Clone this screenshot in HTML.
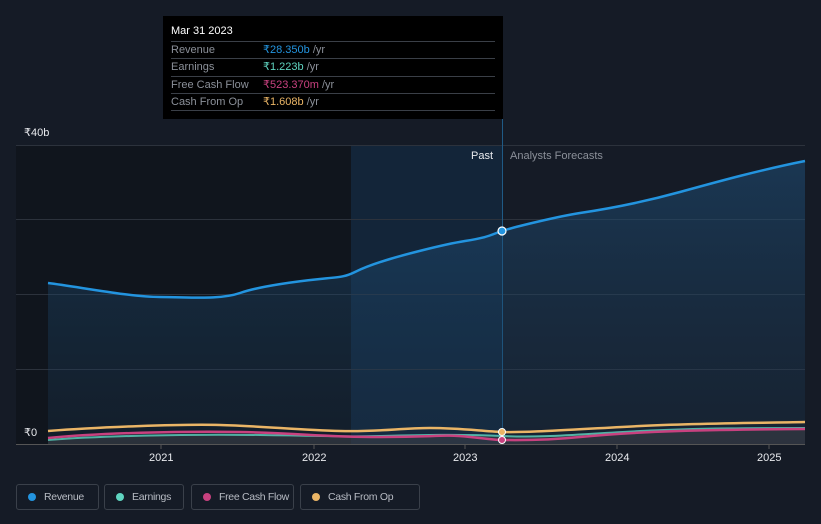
<!DOCTYPE html>
<html><head><style>
html,body{margin:0;width:821px;height:524px;background:#151b26;font-family:"Liberation Sans",sans-serif;overflow:hidden;position:relative}
.tt{position:absolute;left:163px;top:16px;width:340px;height:103px;background:#000;color:#fff;font-size:11px}
.tt .h{position:absolute;left:8px;top:9px;font-size:11px}
.row{position:absolute;left:8px;width:324px;height:17px;border-top:1px solid #3a3f47;color:#8b9099;line-height:17px}
.row span{position:absolute;left:92px}
.lg{position:absolute;top:484px;height:26px;border:1px solid #3a404a;border-radius:3px;color:#b8bcc4;font-size:10.5px;line-height:24px;box-sizing:border-box;padding-left:27px;white-space:nowrap;letter-spacing:-0.3px}
.lg i{position:absolute;left:11px;top:8px;width:8px;height:8px;border-radius:50%}
.ax{position:absolute;color:#e8eaee;font-size:11px}
</style></head><body>
<svg width="821" height="524" style="position:absolute;left:0;top:0">
<defs><linearGradient id="g" x1="0" y1="0" x2="0" y2="1"><stop offset="0" stop-color="#1f5583" stop-opacity=".8"/><stop offset="1" stop-color="#1c3a55" stop-opacity=".4"/></linearGradient></defs>
<rect x="16" y="145" width="486" height="299" fill="#10151d"/>
<rect x="351" y="145" width="151" height="299" fill="#132539"/>
<g stroke="#2c323c" stroke-width="1">
<line x1="16" y1="145.5" x2="805" y2="145.5"/><line x1="16" y1="219.5" x2="805" y2="219.5"/><line x1="16" y1="294.5" x2="805" y2="294.5"/><line x1="16" y1="369.5" x2="805" y2="369.5"/><line x1="16" y1="444.5" x2="805" y2="444.5" stroke="#555"/>
</g>
<line x1="502.5" y1="119" x2="502.5" y2="444" stroke="#1f5a85"/>
<path d="M48,283 C80,287 130,297 160,297 S220,300 240,293 S300,281 320,279 S345,277 355,272 S380,262 390,259 S440,245 465,241 S490,235 502,231 S560,216 580,213 S640,203 680,192 S760,170 805,161 L805,444 L48,444Z" fill="url(#g)" opacity=".6"/>
<path d="M48,283 C80,287 130,297 160,297 S220,300 240,293 S300,281 320,279 S345,277 355,272 S380,262 390,259 S440,245 465,241 S490,235 502,231 S560,216 580,213 S640,203 680,192 S760,170 805,161" fill="none" stroke="#2394df" stroke-width="2.5"/>
<path d="M48,441 C100,437 180,434 260,435 S380,436 440,435 S490,437 502,437 S600,433 700,430 L805,428 L805,444 L48,444Z" fill="#3a3e46" opacity=".6"/>
<path d="M48,440 C100,436 180,434 260,435 S340,437 380,436 S460,434 502,436 S580,434 640,431 S760,428 805,428" fill="none" stroke="#5fd4c0" stroke-width="2" opacity=".8"/>
<path d="M48,438 C100,433 180,431 240,432 S320,437 380,437 S440,434 470,437 S495,440 502,440 S540,441 580,437 S660,431 720,430 S790,429 805,429" fill="none" stroke="#c8417f" stroke-width="2.5"/>
<path d="M48,431 C100,427 180,424 220,425 S300,430 340,431 S400,428 430,428 S480,431 502,432 S580,429 640,426 S760,423 805,422" fill="none" stroke="#eab566" stroke-width="2.5"/>
<circle cx="502" cy="231" r="4" fill="#2394df" stroke="#fff" stroke-width="1.2"/>
<circle cx="502" cy="432" r="3.5" fill="#eab566" stroke="#fff" stroke-width="1"/>
<circle cx="502" cy="440" r="3.5" fill="#c8417f" stroke="#fff" stroke-width="1"/>
<g stroke="#555"><line x1="161" y1="444" x2="161" y2="449"/><line x1="314" y1="444" x2="314" y2="449"/><line x1="465" y1="444" x2="465" y2="449"/><line x1="617" y1="444" x2="617" y2="449"/><line x1="769" y1="444" x2="769" y2="449"/></g>
</svg>
<div class="ax" style="left:24px;top:126px">₹40b</div>
<div class="ax" style="left:24px;top:426px">₹0</div>
<div class="ax" style="left:149px;top:452px">2021</div>
<div class="ax" style="left:302px;top:452px">2022</div>
<div class="ax" style="left:453px;top:452px">2023</div>
<div class="ax" style="left:605px;top:452px">2024</div>
<div class="ax" style="left:757px;top:452px">2025</div>
<div class="ax" style="left:471px;top:150px">Past</div>
<div class="ax" style="left:510px;top:150px;color:#8b9099">Analysts Forecasts</div>
<div class="tt">
<div class="h">Mar 31 2023</div>
<div class="row" style="top:25px">Revenue<span><b style="font-weight:normal;color:#2394df">₹28.350b</b> /yr</span></div>
<div class="row" style="top:42px">Earnings<span><b style="font-weight:normal;color:#5fd4c0">₹1.223b</b> /yr</span></div>
<div class="row" style="top:60px">Free Cash Flow<span><b style="font-weight:normal;color:#c8417f">₹523.370m</b> /yr</span></div>
<div class="row" style="top:77px">Cash From Op<span><b style="font-weight:normal;color:#eab566">₹1.608b</b> /yr</span></div>
<div class="row" style="top:94px;height:0"></div>
</div>
<div class="lg" style="left:16px;width:83px"><i style="background:#2394df"></i>Revenue</div>
<div class="lg" style="left:104px;width:80px"><i style="background:#5fd4c0"></i>Earnings</div>
<div class="lg" style="left:191px;width:103px"><i style="background:#c8417f"></i>Free Cash Flow</div>
<div class="lg" style="left:300px;width:120px"><i style="background:#eab566"></i>Cash From Op</div>
</body></html>
